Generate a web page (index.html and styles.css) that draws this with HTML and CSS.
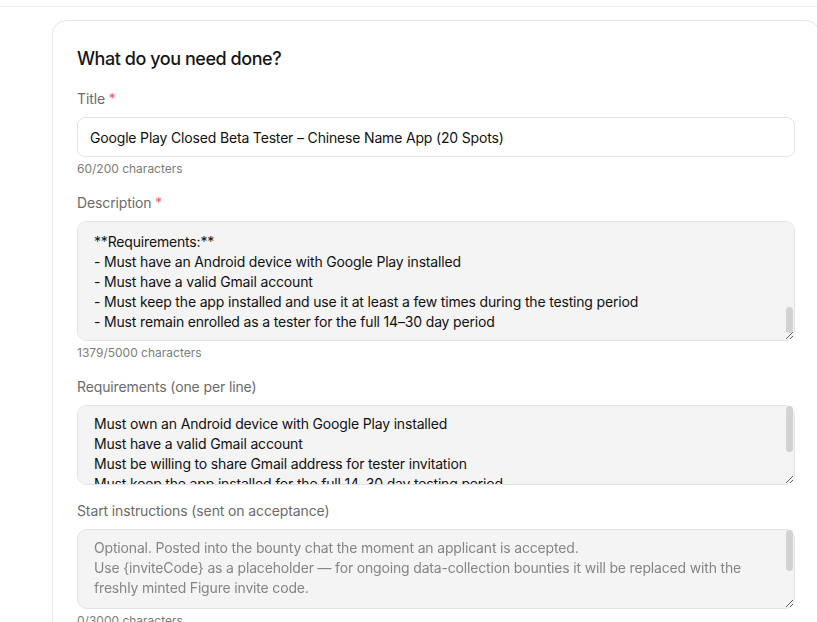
FILE: index.html
```html
<!DOCTYPE html>
<html lang="en">
<head>
    <meta charset="UTF-8">
    <meta name="viewport" content="width=device-width, initial-scale=1.0">
    <title>New bounty</title>
    <link rel="stylesheet" href="styles.css">
</head>
<body>
    <div class="topbar"></div>

    <div class="page">
        <div class="card">
            <h2 class="card-title">What do you need done?</h2>

            <div class="field">
                <label class="label" for="title">Title <span class="req">*</span></label>
                <input type="text" id="title" class="input" value="Google Play Closed Beta Tester – Chinese Name App (20 Spots)">
                <div class="counter">60/200 characters</div>
            </div>

            <div class="field">
                <label class="label" for="description">Description <span class="req">*</span></label>
                <div class="textarea-wrap">
                    <textarea id="description" class="textarea desc">We're looking for 20 Android users to join the closed beta of our Chinese Name App on Google Play.

Google Play requires at least 20 testers to stay opted in for 14 days before an app can move to production, so we need people who will actually keep the app installed.

**What the app does:**
- Generates a meaningful Chinese name based on your English name
- Shows the characters, pinyin and the meaning of each character
- Lets you save and share your favourite names

**What you'll do:**
- Accept the tester invitation sent to your Gmail address
- Install the app from the Google Play testing link
- Open the app every couple of days and try a few features
- Report any bugs or crashes you run into

**Requirements:**
- Must have an Android device with Google Play installed
- Must have a valid Gmail account
- Must keep the app installed and use it at least a few times during the testing period
- Must remain enrolled as a tester for the full 14–30 day period</textarea>
                    <div class="fake-thumb thumb-desc"></div>
                </div>
                <div class="counter">1379/5000 characters</div>
            </div>

            <div class="field">
                <label class="label" for="requirements">Requirements (one per line)</label>
                <div class="textarea-wrap">
                    <textarea id="requirements" class="textarea reqs">Must own an Android device with Google Play installed
Must have a valid Gmail account
Must be willing to share Gmail address for tester invitation
Must keep the app installed for the full 14–30 day testing period
Must open the app at least a few times during testing
Must not opt out of the testing program early</textarea>
                    <div class="fake-thumb thumb-reqs"></div>
                </div>
            </div>

            <div class="field">
                <label class="label" for="startInstructions">Start instructions (sent on acceptance)</label>
                <div class="textarea-wrap">
                    <textarea id="startInstructions" class="textarea start" placeholder="Optional. Posted into the bounty chat the moment an applicant is accepted.&#10;Use {inviteCode} as a placeholder — for ongoing data-collection bounties it will be replaced with the&#10;freshly minted Figure invite code."></textarea>
                    <div class="fake-thumb thumb-start"></div>
                </div>
                <div class="counter">0/3000 characters</div>
            </div>
        </div>
    </div>

    <script>
        // description is shown scrolled to the end, like in the editor
        const desc = document.getElementById('description');
        desc.scrollTop = desc.scrollHeight;
    </script>
</body>
</html>
```

FILE: styles.css
```css
html, body {
    margin: 0;
    padding: 0;
    overflow: hidden;
    background: #fff;
}

body {
    font-family: Inter, "Noto Sans", Arial, sans-serif;
    color: #111;
}

.topbar {
    height: 6px;
    border-bottom: 1px solid #ececec;
}

.page {
    padding: 13px 0 0 52px;
}

.card {
    width: 768px;
    box-sizing: border-box;
    border: 1px solid #e6e6e6;
    border-radius: 14px;
    padding: 24px;
    display: flex;
    flex-direction: column;
    gap: 16px;
}

.card-title {
    margin: 0;
    font-size: 18px;
    line-height: 28px;
    font-weight: 500;
    letter-spacing: -0.45px;
    color: #161616;
}

.field {
    display: flex;
    flex-direction: column;
}

.label {
    font-size: 14px;
    line-height: 20px;
    letter-spacing: -0.12px;
    color: #6b6b6b;
    margin-bottom: 8px;
}

.req {
    color: #ef5a72;
}

.input {
    box-sizing: border-box;
    width: 100%;
    height: 40px;
    padding: 0 12px;
    border: 1px solid #e4e4e4;
    border-radius: 8px;
    background: #fff;
    font-family: inherit;
    font-size: 14px;
    letter-spacing: -0.17px;
    color: #111;
    outline: none;
}

.counter {
    margin-top: 4px;
    font-size: 12px;
    line-height: 16px;
    color: #7c7c7c;
}

.textarea {
    display: block;
    box-sizing: border-box;
    width: 100%;
    padding: 8px 14px 8px 16px;
    border: 1px solid #e2e2e2;
    border-radius: 10px;
    background: #f4f4f4;
    font-family: inherit;
    font-size: 14px;
    line-height: 20px;
    letter-spacing: -0.17px;
    color: #111;
    resize: vertical;
    outline: none;
    white-space: pre-wrap;
}

.textarea::placeholder {
    color: #858585;
}

.desc {
    height: 120px;
}

.reqs {
    height: 80px;
}

.start {
    height: 80px;
}

.textarea-wrap {
    position: relative;
}

/* scrollbars are hidden in the capture, so the thumbs are drawn */
.fake-thumb {
    position: absolute;
    right: 2px;
    width: 7px;
    border-radius: 4px;
    background: #d2d2d2;
}

.thumb-desc {
    top: 86px;
    height: 26px;
}

.thumb-reqs {
    top: 1px;
    height: 46px;
}

.thumb-start {
    top: 1px;
    height: 41px;
}
```
